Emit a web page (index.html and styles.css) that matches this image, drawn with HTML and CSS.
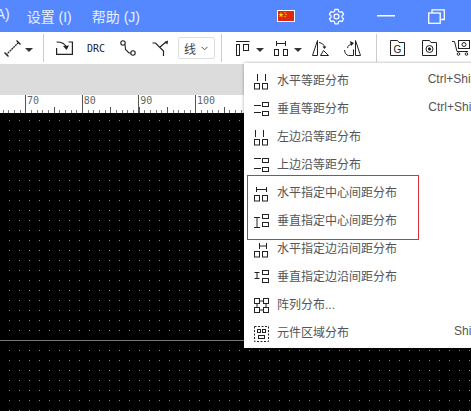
FILE: index.html
```html
<!DOCTYPE html>
<html lang="zh-CN">
<head>
  <meta charset="UTF-8" />
  <title>分布菜单</title>
  <link rel="stylesheet" href="styles.css">
</head>
<body>

<!-- Title bar -->
<div class="titlebar">
  <div class="menus">
    <span class="menu-clip">(A)</span>
    <span>设置 (I)</span>
    <span>帮助 (J)</span>
  </div>
  <div class="win-buttons">
    <svg class="flag" width="18" height="12" viewBox="0 0 18 12">
      <rect x="0.500" y="0.500" width="17" height="11" fill="#de2910" stroke="#fff"/>
      <polygon points="4,2 4.700,4 6.600,4 5,5.200 5.700,7.200 4,6 2.300,7.200 3,5.200 1.400,4 3.300,4" fill="#ffde00"/>
      <circle cx="8" cy="2.600" r="0.700" fill="#ffde00"/>
      <circle cx="9" cy="4.400" r="0.700" fill="#ffde00"/>
      <circle cx="8" cy="6.600" r="0.700" fill="#ffde00"/>
    </svg>
    <svg class="gear" width="17" height="17" viewBox="0 0 18 18" fill="none" stroke="#fff" stroke-width="1.300">
      <path d="M7.300 1.500h3.400l.5 2.200 1.400.8 2.200-.7 1.700 3-1.700 1.500v1.600l1.700 1.500-1.700 3-2.200-.7-1.400.8-.5 2.200H7.300l-.5-2.200-1.400-.8-2.200.7-1.700-3 1.700-1.500V8.300L1.500 6.800l1.700-3 2.200.7 1.400-.8z" stroke-linejoin="round"/>
      <circle cx="9" cy="9" r="2.600"/>
    </svg>
    <svg class="minimize" width="18" height="2" viewBox="0 0 18 2"><rect width="18" height="1.500" fill="#fff"/></svg>
    <svg class="restore" width="17" height="15" viewBox="0 0 17 15" fill="none" stroke="#fff" stroke-width="1.300">
      <rect x="0.700" y="4" width="11.500" height="10.300"/>
      <path d="M4 4V0.800h12.300V10.500H12.200"/>
    </svg>
  </div>
</div>

<!-- Toolbar -->
<div class="toolbar">
  <div class="tool tool-first">
    <svg width="17" height="17" viewBox="0 0 17 17" fill="none" stroke="#222">
      <path d="M2 15L15 2" stroke-dasharray="2 0.600" stroke-width="1.300"/>
      <path d="M0.500 12.500l4 4M12.500 0.500l4 4" stroke-width="1.300"/>
    </svg>
    <i class="caret"></i>
  </div>
  <span class="sep"></span>
  <div class="tool">
    <svg width="17" height="14" viewBox="0 0 17 14" fill="none" stroke="#222" stroke-width="1.200">
      <path d="M0.600 7v6.400h15.800V1H12.500"/>
      <path d="M0.600 1C5 1 8.500 1.500 10 6"/>
      <path d="M7 5l3.600 4L13 4.500z" fill="#222" stroke="none"/>
    </svg>
  </div>
  <div class="tool drc">DRC</div>
  <div class="tool">
    <svg width="16" height="16" viewBox="0 0 16 16" fill="none" stroke="#222" stroke-width="1.100">
      <circle cx="3" cy="3" r="2.200"/>
      <circle cx="13" cy="13" r="2.200"/>
      <path d="M5 4.500l.5 5L9 13h1.800"/>
    </svg>
  </div>
  <div class="tool">
    <svg width="17" height="16" viewBox="0 0 17 16" fill="none" stroke="#222" stroke-width="1.200">
      <path d="M0.500 3h3l8 8v5"/>
      <path d="M8 7l6-5"/>
      <polygon points="16,0.500 15.500,4.500 12.500,2" fill="#222" stroke="none"/>
    </svg>
  </div>
  <div class="line-select">
    <span class="line-label">线</span>
    <svg width="7" height="5" viewBox="0 0 7 5" fill="none" stroke="#555"><path d="M0.500 0.800L3.500 3.800 6.500 0.800"/></svg>
  </div>
  <span class="sep sep-second"></span>
  <div class="tool tool-drop">
    <svg width="14" height="15" viewBox="0 0 14 15" fill="none" stroke="#222">
      <path d="M0 0.500h13.500"/>
      <rect x="0.500" y="3.500" width="3" height="11"/>
      <rect x="7.500" y="3.500" width="5" height="6"/>
    </svg>
    <i class="caret"></i>
  </div>
  <div class="tool tool-drop tool-narrow">
    <svg width="14" height="15" viewBox="0 0 14 15" fill="none" stroke="#222">
      <path d="M2.500 0v5M11.500 0v5M2.500 2.500h9"/>
      <rect x="0.500" y="8.500" width="4" height="6"/>
      <rect x="9.500" y="8.500" width="4" height="6"/>
    </svg>
    <i class="caret"></i>
  </div>
  <div class="tool">
    <svg width="17" height="16" viewBox="0 0 17 16" fill="none" stroke="#222">
      <path d="M5.500 0.500L0.500 15.500h5z"/>
      <path d="M7 2.500c3 .5 5 2 5.500 4.500"/>
      <path d="M10.500 6.500h4l-2 2.500z" fill="#222" stroke="none"/>
      <path d="M8.500 15.500h8l-5-5z"/>
    </svg>
  </div>
  <div class="tool">
    <svg width="17" height="16" viewBox="0 0 17 16" fill="none" stroke="#222">
      <path d="M11.500 0.500l5 15h-5z"/>
      <path d="M9 3.500c-3 .5-5 2-5.500 4.500"/>
      <path d="M6 1l4 2-3 3z" fill="#222" stroke="none"/>
      <path d="M0.500 10c0 2.500 2 5.500 4 5.500h5V9.500"/>
    </svg>
  </div>
  <span class="sep sep-third"></span>
  <div class="tool">
    <svg width="15" height="16" viewBox="0 0 15 16" fill="none" stroke="#222">
      <path d="M0.500 0.500h7l1.500 2h5.500v13H0.500z"/>
      <text x="7.500" y="13" class="file-letter">G</text>
    </svg>
  </div>
  <div class="tool">
    <svg width="15" height="16" viewBox="0 0 15 16" fill="none" stroke="#222">
      <path d="M0.500 0.500h7l1.500 2h5.500v13H0.500z"/>
      <circle cx="7.500" cy="9" r="3.500"/>
      <circle cx="7.500" cy="9" r="1.200" fill="#222"/>
    </svg>
  </div>
  <div class="tool">
    <svg width="18" height="16" viewBox="0 0 18 16" fill="none" stroke="#222">
      <path d="M0 1.500h2.500l2.500 10h11"/>
      <rect x="6.500" y="0.500" width="11" height="8"/>
      <circle cx="12" cy="4.500" r="2"/>
      <circle cx="6.500" cy="14" r="1.300"/>
      <circle cx="14.500" cy="14" r="1.300"/>
    </svg>
  </div>
</div>

<div class="tabstrip"></div>

<!-- Ruler -->
<div class="ruler">
  <span class="mark">70</span>
  <span class="mark">80</span>
  <span class="mark">90</span>
  <span class="mark">100</span>
</div>

<!-- Canvas -->
<div class="canvas">
  <div class="axis-line"></div>
</div>

<!-- Distribute menu -->
<div class="dropdown">
  <div class="item">
    <svg class="item-icon" width="15" height="16" viewBox="0 0 15 16" fill="none" stroke="#222">
      <path d="M3.500 0v7M11.500 0v7"/>
      <rect x="0.500" y="9.500" width="5" height="5.500"/><rect x="8.500" y="9.500" width="5" height="5.500"/>
    </svg>
    <span class="label">水平等距分布</span><span class="keys">Ctrl+Shift+H</span>
  </div>
  <div class="item">
    <svg class="item-icon" width="15" height="16" viewBox="0 0 15 16" fill="none" stroke="#222">
      <path d="M0 3.500h7M0 10.500h7"/>
      <rect x="8.500" y="0.500" width="6" height="4"/><rect x="8.500" y="9.500" width="6" height="4"/>
    </svg>
    <span class="label">垂直等距分布</span><span class="keys">Ctrl+Shift+V</span>
  </div>
  <div class="item">
    <svg class="item-icon" width="15" height="16" viewBox="0 0 15 16" fill="none" stroke="#222">
      <path d="M1.500 0v7M9.500 0v7"/>
      <rect x="0.500" y="9.500" width="5" height="5.500"/><rect x="8.500" y="9.500" width="5" height="5.500"/>
    </svg>
    <span class="label">左边沿等距分布</span>
  </div>
  <div class="item">
    <svg class="item-icon" width="15" height="16" viewBox="0 0 15 16" fill="none" stroke="#222">
      <path d="M0 0.500h7M0 10.500h7"/>
      <rect x="8.500" y="0.500" width="6" height="4"/><rect x="8.500" y="9.500" width="6" height="4"/>
    </svg>
    <span class="label">上边沿等距分布</span>
  </div>
  <div class="item">
    <svg class="item-icon" width="15" height="16" viewBox="0 0 15 16" fill="none" stroke="#222">
      <path d="M2.500 1v5M12.500 1v5M2.500 3.500h10"/>
      <rect x="0.500" y="9.500" width="5" height="5.500"/><rect x="8.500" y="9.500" width="5" height="5.500"/>
    </svg>
    <span class="label">水平指定中心间距分布</span>
  </div>
  <div class="item">
    <svg class="item-icon" width="15" height="16" viewBox="0 0 15 16" fill="none" stroke="#222">
      <path d="M0 3.500h6M0 13.500h6M3 3.500v10"/>
      <rect x="8.500" y="0.500" width="6" height="4"/><rect x="8.500" y="8.500" width="6" height="4"/>
    </svg>
    <span class="label">垂直指定中心间距分布</span>
  </div>
  <div class="item">
    <svg class="item-icon" width="15" height="16" viewBox="0 0 15 16" fill="none" stroke="#222">
      <path d="M5.500 1v6M12.500 1v6M5.500 4h7"/>
      <rect x="0.500" y="9.500" width="5" height="5.500"/><rect x="8.500" y="9.500" width="5" height="5.500"/>
    </svg>
    <span class="label">水平指定边沿间距分布</span>
  </div>
  <div class="item">
    <svg class="item-icon" width="15" height="16" viewBox="0 0 15 16" fill="none" stroke="#222">
      <path d="M0.500 2.500h5M0.500 8.500h5M3 2.500v6"/>
      <rect x="8.500" y="0.500" width="6" height="4"/><rect x="8.500" y="8.500" width="6" height="4"/>
    </svg>
    <span class="label">垂直指定边沿间距分布</span>
  </div>
  <div class="item">
    <svg class="item-icon" width="15" height="16" viewBox="0 0 15 16" fill="none" stroke="#222">
      <rect x="0.500" y="0.500" width="5" height="5"/><rect x="9.500" y="0.500" width="5" height="5"/>
      <rect x="0.500" y="9.500" width="5" height="5"/><rect x="9.500" y="9.500" width="5" height="5"/>
      <path d="M5.500 3h4M5.500 12h4M3 5.500v4M12 5.500v4"/>
    </svg>
    <span class="label">阵列分布...</span>
  </div>
  <div class="item">
    <svg class="item-icon" width="15" height="16" viewBox="0 0 15 16" fill="none" stroke="#222">
      <rect x="0.500" y="0.500" width="14" height="15" stroke-dasharray="2 1.500"/>
      <rect x="3.500" y="3.500" width="3" height="3"/><rect x="8.500" y="3.500" width="3" height="3"/>
      <rect x="4.500" y="9.500" width="6" height="3"/>
    </svg>
    <span class="label">元件区域分布</span><span class="keys">Shift+A</span>
  </div>
</div>

<div class="annotation"></div>

</body>
</html>
```

FILE: styles.css
```css
* {
  box-sizing: border-box;
  margin: 0;
  padding: 0;
}

html, body {
  height: 100%;
  overflow: hidden;
}

body {
  display: flex;
  flex-direction: column;
  position: relative;
  font-family: "Liberation Sans", "Noto Sans CJK SC", sans-serif;
  background: #000;
}

.titlebar {
  height: 32px;
  flex-shrink: 0;
  background: #5588ff;
  color: #e8efff;
  font-size: 14px;
  display: flex;
  align-items: center;
  justify-content: space-between;
  overflow: hidden;
}

.menus {
  display: flex;
  gap: 20px;
}

.menu-clip {
  margin-left: -9px;
  margin-right: -3px;
}

.win-buttons {
  display: flex;
  align-items: center;
  width: 194px;
}

.flag {
  margin-right: 33px;
}

.gear {
  margin-right: 32px;
}

.minimize {
  margin-right: 33px;
}

.toolbar {
  height: 33px;
  flex-shrink: 0;
  background: #fff;
  border-bottom: 1px solid #ddd;
  display: flex;
  align-items: center;
}

.tool {
  width: 32px;
  height: 32px;
  flex-shrink: 0;
  display: flex;
  align-items: center;
  justify-content: center;
}

.tool-first {
  width: 43px;
  gap: 4px;
  justify-content: flex-start;
  padding-left: 4px;
}

.tool-drop {
  width: 38px;
  gap: 6px;
  justify-content: flex-start;
  padding-left: 5px;
}

.tool-narrow {
  width: 35px;
}

.caret {
  width: 0;
  height: 0;
  border-left: 4px solid transparent;
  border-right: 4px solid transparent;
  border-top: 4px solid #333;
  margin-top: 3px;
}

.sep {
  width: 1px;
  height: 28px;
  flex-shrink: 0;
  background: #ccc;
  margin-right: 4px;
}

.sep-second {
  margin-left: 6px;
  margin-right: 9px;
}

.sep-third {
  margin-left: 8px;
  margin-right: 4px;
}

.drc {
  font-family: "DejaVu Sans Mono", monospace;
  font-size: 10px;
  color: #222;
}

.file-letter {
  font-family: "Liberation Sans", sans-serif;
  font-size: 10px;
  fill: #222;
  stroke: none;
  text-anchor: middle;
}

.line-select {
  width: 37px;
  height: 22px;
  margin-left: 2px;
  flex-shrink: 0;
  border: 1px solid #ddd;
  border-radius: 2px;
  display: flex;
  align-items: center;
  gap: 5px;
  padding-left: 5px;
}

.line-label {
  font-size: 12px;
  color: #444;
}

.tabstrip {
  height: 30px;
  flex-shrink: 0;
  background: #dcdcdc;
}

.ruler {
  height: 18px;
  flex-shrink: 0;
  background-color: #fff;
  background-image:
    repeating-linear-gradient(to right, #555 0 1px, transparent 1px 28.33px),
    repeating-linear-gradient(to right, #777 0 1px, transparent 1px 5.667px);
  background-size: 100% 6px, 100% 3px;
  background-position: -3px bottom, -3px bottom;
  background-repeat: no-repeat;
  display: flex;
  padding-left: 25px;
}

.mark {
  width: 56.67px;
  flex-shrink: 0;
  border-left: 1px solid #555;
  padding-left: 1px;
  font-family: "DejaVu Sans Mono", monospace;
  font-size: 10px;
  line-height: 12px;
  color: #666;
}

.canvas {
  flex: 1;
  position: relative;
  background-color: #000;
  background-image: radial-gradient(circle at 0.5px 0.5px, #8a8a8a 0 0.7px, transparent 0.7px);
  background-size: 10px 10px;
  background-position: 9px 7px;
}

.axis-line {
  position: absolute;
  left: 0;
  right: 0;
  top: 227px;
  height: 1px;
  background: #777;
}

.dropdown {
  position: absolute;
  left: 244px;
  top: 63px;
  width: 262px;
  height: 285px;
  padding-top: 3px;
  background: #fff;
  box-shadow: 0 0 3px rgba(0, 0, 0, 0.35);
}

.item {
  height: 28px;
  display: flex;
  align-items: center;
  padding: 0 13px 0 10px;
  font-size: 12px;
  color: #555;
}

.item-icon {
  flex-shrink: 0;
  margin-top: 4px;
  margin-right: 8px;
}

.label {
  flex: 1;
  margin-top: -2px;
  white-space: nowrap;
}

.keys {
  margin-top: -2px;
  white-space: nowrap;
}

.annotation {
  position: absolute;
  left: 247px;
  top: 175px;
  width: 172px;
  height: 65px;
  border: 1px solid #d9303c;
}
```
